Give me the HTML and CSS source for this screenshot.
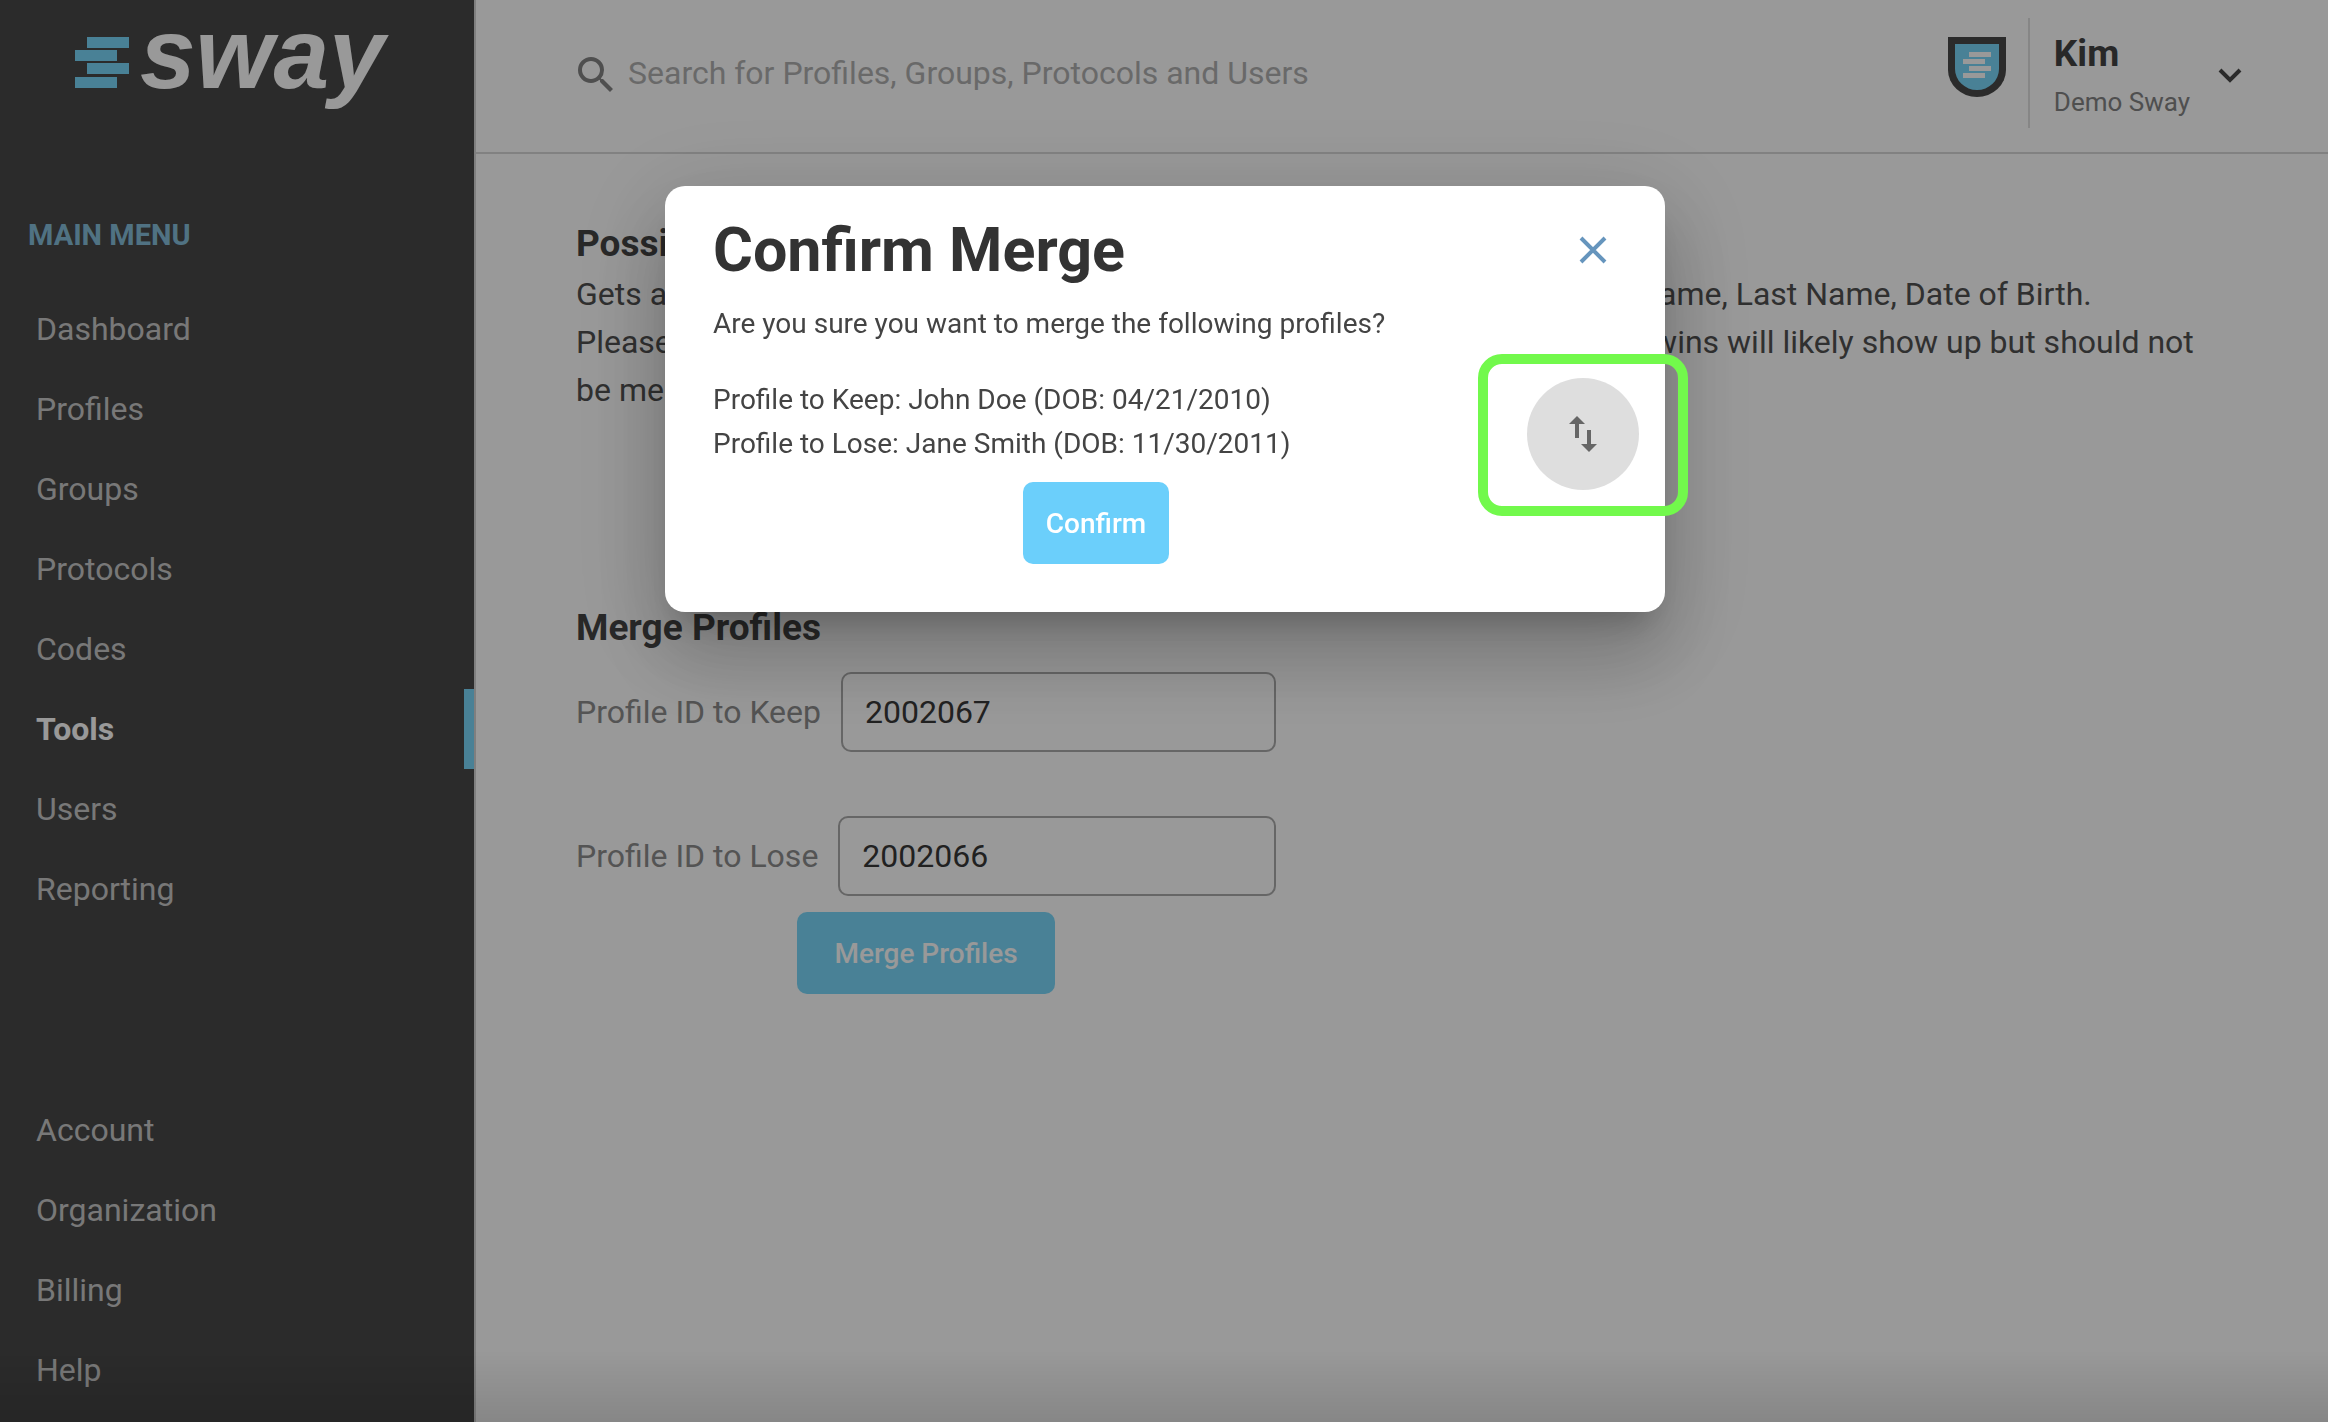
FILE: index.html
```html
<!DOCTYPE html>
<html lang="en">
	<head>
		<meta charset="UTF-8">
		<meta name="viewport" content="width=device-width, initial-scale=1">
		<title>Sway - Tools</title>
		<link rel="stylesheet" href="styles.css">
	</head>
	<body>
		<div class="page">
			<aside class="sidebar">
				<a href="#" class="logo">
					<svg class="logo-mark" viewBox="0 0 54 51" aria-hidden="true">
						<path d="M12 0h42v11H12zM0 13h42v11H0zM12 26h42v11H12zM0 40h42v11H0z"/>
					</svg>
					<span class="logo-text">sway</span>
				</a>
				<h2 class="menu-title">MAIN MENU</h2>
				<nav class="menu">
					<a href="#">Dashboard</a>
					<a href="#">Profiles</a>
					<a href="#">Groups</a>
					<a href="#">Protocols</a>
					<a href="#">Codes</a>
					<a href="#" class="active">Tools</a>
					<a href="#">Users</a>
					<a href="#">Reporting</a>
				</nav>
				<nav class="menu menu-bottom">
					<a href="#">Account</a>
					<a href="#">Organization</a>
					<a href="#">Billing</a>
					<a href="#">Help</a>
				</nav>
			</aside>

			<div class="main">
				<header class="header">
					<label class="search">
						<svg class="search-icon" viewBox="3 3 18 18" aria-hidden="true">
							<path d="M15.5 14h-.79l-.28-.27A6.471 6.471 0 0 0 16 9.500 6.500 6.500 0 1 0 9.500 16c1.610 0 3.090-.59 4.230-1.570l.27.28v.79l5 4.990L20.490 19l-4.990-5zm-6 0C7.010 14 5 11.990 5 9.500S7.010 5 9.500 5 14 7.010 14 9.500 11.990 14 9.500 14z"/>
						</svg>
						<input type="text" placeholder="Search for Profiles, Groups, Protocols and Users" aria-label="Search">
					</label>
					<div class="account">
						<svg class="shield" viewBox="0 0 58 60" aria-hidden="true">
							<path class="shield-edge" d="M0 0h58v33a29 27 0 0 1-58 0z"/>
							<path class="shield-fill" d="M7 7h44v25a22 21 0 0 1-44 0z"/>
							<path class="shield-bars" d="M21 15h22v5H21zM15 22h22v5H15zM21 29h22v5H21zM15 36h22v5H15z"/>
						</svg>
						<div class="user">
							<span class="user-name">Kim</span>
							<span class="user-org">Demo Sway</span>
						</div>
						<button type="button" class="user-toggle" aria-label="Account menu">
							<svg viewBox="0 0 24 16" aria-hidden="true">
								<path d="M2 2l10 10L22 2"/>
							</svg>
						</button>
					</div>
				</header>

				<main class="content">
					<h3>Possible Duplicate Profiles</h3>
					<p>
						Gets a list of all of the possible duplicate profiles that share the same First Name, Last Name, Date of Birth.<br>
						Please check that profiles are duplicates before you merge either of these. Twins will likely show up but should not<br>
						be merged.
					</p>
					<form class="merge-form" action="" method="post">
						<h3>Merge Profiles</h3>
						<div class="formitem">
							<label for="keep">Profile ID to Keep</label>
							<input type="text" id="keep" name="keep" value="2002067">
						</div>
						<div class="formitem">
							<label for="lose">Profile ID to Lose</label>
							<input type="text" id="lose" name="lose" value="2002066">
						</div>
						<button type="button" class="btn btn-wide">Merge Profiles</button>
					</form>
				</main>
			</div>
		</div>

		<div class="overlay">
			<div class="modal" role="dialog" aria-labelledby="modalTitle">
				<div class="modal-head">
					<h1 id="modalTitle">Confirm Merge</h1>
					<button type="button" class="close" aria-label="Close">
						<svg viewBox="0 0 28 28" aria-hidden="true">
							<path d="M2 2l24 24M26 2L2 26"/>
						</svg>
					</button>
				</div>
				<p class="question">Are you sure you want to merge the following profiles?</p>
				<div class="modal-body">
					<div class="profiles">
						<p>Profile to Keep: John Doe (DOB: 04/21/2010)</p>
						<p>Profile to Lose: Jane Smith (DOB: 11/30/2011)</p>
						<button type="button" class="btn">Confirm</button>
					</div>
					<div class="swap-wrap">
						<button type="button" class="swap" aria-label="Swap profiles">
							<svg viewBox="0 0 24 24" aria-hidden="true">
								<path d="M9 3L5 6.990h3V14h2V6.990h3L9 3zm7 14.010V10h-2v7.010h-3L15 21l4-3.990h-3z"/>
							</svg>
						</button>
						<span class="highlight"></span>
					</div>
				</div>
			</div>
		</div>
	</body>
</html>
```
FILE: styles.css
```css
* {
	box-sizing: border-box;
	margin: 0;
	padding: 0;
}
body {
	font-family: Roboto, "Liberation Sans", sans-serif;
	font-size: 32px;
	color: #505050;
	background-color: #fff;
}
a {
	text-decoration: none;
}
button, input {
	font-family: inherit;
	font-size: inherit;
	border: none;
	background: none;
}
button {
	cursor: pointer;
}
.page {
	display: flex;
	min-height: 100vh;
}

/* sidebar */
.sidebar {
	display: flex;
	flex-direction: column;
	flex: none;
	width: 476px;
	padding-bottom: 12px;
	background-color: #484848;
	border-right: 2px solid #d4d4d4;
}
.logo {
	display: flex;
	align-items: flex-start;
	gap: 11px;
	height: 214px;
	padding-left: 75px;
}
.logo-mark {
	width: 54px;
	margin-top: 37px;
	fill: #7bd8fb;
}
.logo-text {
	font-family: "Liberation Sans", Arial, sans-serif;
	font-size: 100px;
	font-weight: bold;
	font-style: italic;
	line-height: 106px;
	color: #fff;
}
.menu-title {
	padding-left: 28px;
	font-size: 29px;
	line-height: 42px;
	margin-bottom: 33px;
	color: #85bfda;
}
.menu a {
	display: block;
	height: 80px;
	padding-left: 36px;
	line-height: 80px;
	color: #c8c8c8;
}
.menu .active {
	font-weight: bold;
	color: #fff;
	border-right: 10px solid #7bd8fb;
}
.menu-bottom {
	margin-top: auto;
}

/* header */
.main {
	flex: 1;
	min-width: 0;
}
.header {
	display: flex;
	justify-content: space-between;
	height: 154px;
	padding: 18px 84px 0 102px;
	border-bottom: 2px solid #d8d8d8;
}
.search {
	display: flex;
	flex: 1;
	align-items: center;
	gap: 14px;
	height: 110px;
}
.search-icon {
	width: 36px;
	height: 36px;
	margin-top: 3px;
	fill: #848484;
}
.search input {
	flex: 1;
	max-width: 900px;
	height: 60px;
}
.search input::placeholder {
	color: #b0b0b0;
}
.account {
	display: flex;
	height: 110px;
}
.shield {
	width: 58px;
	height: 60px;
	margin: 19px 22px 0 0;
}
.shield-edge {
	fill: #484848;
}
.shield-fill {
	fill: #7bd8fb;
}
.shield-bars {
	fill: #fff;
}
.user {
	display: flex;
	flex-direction: column;
	padding: 12px 24px 0;
	border-left: 2px solid #e0e0e0;
}
.user-name {
	font-size: 37px;
	font-weight: bold;
	line-height: 48px;
	color: #444;
}
.user-org {
	font-size: 26px;
	line-height: 48px;
	color: #848484;
}
.user-toggle {
	width: 28px;
	margin-left: 2px;
}
.user-toggle svg {
	width: 24px;
	fill: none;
	stroke: #484848;
	stroke-width: 4;
}

/* tools page */
.content {
	padding: 64px 100px;
	line-height: 48px;
}
.content h3 {
	font-size: 37px;
	line-height: 52px;
	color: #444;
}
.merge-form {
	display: flex;
	flex-direction: column;
	width: 700px;
	margin-top: 188px;
}
.merge-form h3 {
	margin-bottom: 18px;
}
.formitem {
	display: flex;
	align-items: center;
	gap: 20px;
	margin-bottom: 64px;
	color: #8c8c8c;
}
.formitem input {
	flex: 1;
	min-width: 0;
	height: 80px;
	padding: 0 22px;
	color: #383838;
	border: 2px solid #aaa;
	border-radius: 10px;
}
.btn {
	align-self: center;
	height: 82px;
	padding: 0 23px;
	font-size: 28px;
	font-weight: 500;
	color: #fff;
	background-color: #6bcffb;
	border-radius: 10px;
}
.btn-wide {
	margin-top: -48px;
	padding: 0 37px;
	background-color: #7bd8fb;
}

/* confirm dialog */
.overlay {
	position: fixed;
	inset: 0;
	display: flex;
	justify-content: center;
	align-items: flex-start;
	padding: 186px 0 0 2px;
	background: linear-gradient(to top, rgba(0, 0, 0, .12), transparent 72px), rgba(0, 0, 0, .4);
}
.modal {
	width: 1000px;
	padding: 24px 48px 48px;
	font-size: 28px;
	line-height: 44px;
	color: #444;
	background-color: #fff;
	border-radius: 20px;
	box-shadow: 0 22px 30px -14px rgba(0, 0, 0, .2), 0 48px 76px 6px rgba(0, 0, 0, .14), 0 18px 92px 16px rgba(0, 0, 0, .12);
}
.modal-head {
	display: flex;
	justify-content: space-between;
	align-items: center;
}
.modal h1 {
	font-size: 61px;
	line-height: 80px;
	color: #333;
}
.close {
	display: flex;
	justify-content: center;
	align-items: center;
	width: 48px;
	height: 48px;
}
.close svg {
	width: 28px;
	fill: none;
	stroke: #6695bd;
	stroke-width: 4;
}
.question {
	margin-top: 12px;
}
.modal-body {
	display: flex;
	margin-top: 32px;
}
.profiles {
	display: flex;
	flex: 1;
	flex-direction: column;
}
.profiles .btn {
	margin-top: 16px;
}
.swap-wrap {
	position: relative;
	align-self: flex-start;
	padding: 0 26px 0 48px;
	margin-right: -48px;
}
.swap {
	display: flex;
	justify-content: center;
	align-items: center;
	width: 112px;
	height: 112px;
	background-color: #dedede;
	border-radius: 50%;
}
.swap svg {
	width: 48px;
	height: 48px;
	fill: #666;
}
/* frame round the swap button */
.highlight {
	position: absolute;
	top: -24px;
	right: -23px;
	width: 210px;
	height: 162px;
	border: 10px solid #72f94c;
	border-radius: 24px;
	pointer-events: none;
}
```
